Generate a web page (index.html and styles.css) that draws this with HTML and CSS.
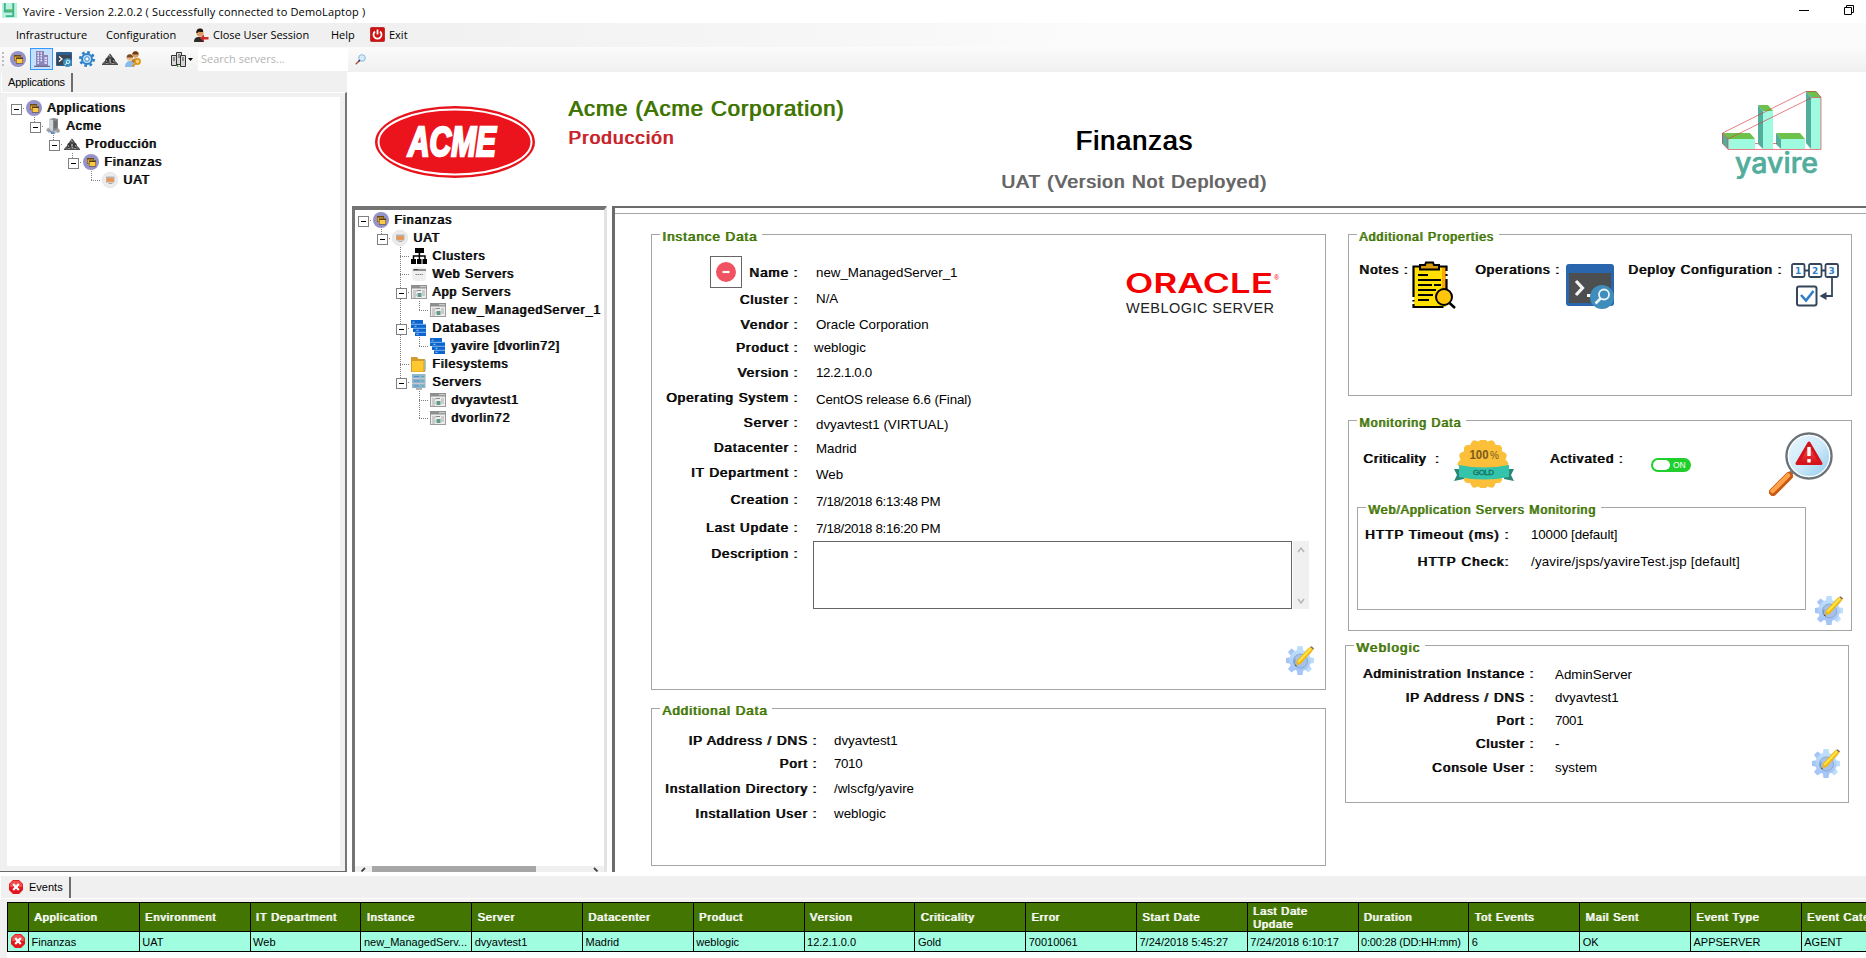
FILE: index.html
```html
<!DOCTYPE html>
<html lang="en">
<head>
<meta charset="utf-8">
<title>Yavire</title>
<link rel="stylesheet" href="styles.css">
</head>
<body>
<svg class="defs" width="0" height="0">
  <defs>
    <linearGradient id="sky" x1="0" y1="0" x2="0" y2="1"><stop offset="0" stop-color="#bfe0fb"/><stop offset="1" stop-color="#a3c2f7"/></linearGradient>
    <linearGradient id="glass" x1="0" y1="0" x2="1" y2="1"><stop offset="0" stop-color="#eaf7fe"/><stop offset=".5" stop-color="#cfeafa"/><stop offset="1" stop-color="#8cc8ec"/></linearGradient>
    <linearGradient id="red" x1="0" y1="0" x2="0" y2="1"><stop offset="0" stop-color="#f7615f"/><stop offset="1" stop-color="#d80f16"/></linearGradient>
  </defs>
  <symbol id="apps" viewBox="0 0 16 16"><circle cx="8" cy="8" r="8" fill="#9492c8"/><path d="M4 4h7v6H4z" fill="#6b4a12"/><path d="M4.500 5.500h6v4h-6z" fill="#e0a93c"/><path d="M6 6.500h7v6H6z" fill="#5b3d0c"/><path d="M6.500 8h6v4h-6z" fill="#fbc945"/></symbol>
  <symbol id="srvgray" viewBox="0 0 16 16"><path d="M1 11l4-2h7l3 3-6 4z" fill="#b9bcbf"/><path d="M4 1l5-1 4 1v10l-4 2-5-2z" fill="#85888b"/><path d="M4 1l4 1v11l-4-2z" fill="#d3d6d8"/><path d="M9 3l3-.5v7L9 10.500z" fill="#6b6e71"/><path d="M1 12l3-2 2 3-2 2zM11 12l3-1 1 3-3 1z" fill="#9da1a5"/><path d="M5 13l4 1 1 2-4 0z" fill="#5a8fc0"/></symbol>
  <symbol id="pyr" viewBox="0 0 16 16"><path d="M8 2.500l2.500 3-1 3h-3l-1-3z" fill="#4a4a4a"/><path d="M3.500 8l2-2 2 3-1 3h-4zM12.500 8l-2-2-2 3 1 3h4z" fill="#333"/><path d="M0 13l2.500-3 2.500 3zM5 13l3-4 3 4zM11 13l2.500-3L16 13z" fill="#5c5c5c"/><path d="M0 13h16v.8H0z" fill="#222"/><path d="M7 4l1.500 2M4 9l1 2M11 9l1.200 2M8 10.500l.8 2" stroke="#bbb" stroke-width=".8"/></symbol>
  <symbol id="uat" viewBox="0 0 16 16"><circle cx="8" cy="8" r="7.800" fill="#ececec" stroke="#d8d8d8" stroke-width=".5"/><rect x="4" y="4.500" width="8.500" height="6" fill="#b9b0ae"/><rect x="5" y="6.500" width="6.500" height="3" fill="#f5923c"/><path d="M6.500 11h4v.8h-4z" fill="#999"/></symbol>
  <symbol id="clusters" viewBox="0 0 16 16"><path d="M4 0h9v5H4zM0 11h5v5H0zM6 11h4.500v5H6zM11.500 11H16v5h-4.500z"/><path d="M8.400 5v6M2.500 11V8h11.500v3" fill="none" stroke="#000" stroke-width="1.500"/></symbol>
  <symbol id="websrv" viewBox="0 0 16 16"><rect x="1" y="1" width="14" height="14" rx="4" fill="#efefef"/><path d="M2 3h13v2H2z" fill="#8b8d90"/><path d="M3 3h4v1H3z" fill="#444"/><path d="M4.500 8.500h7.500" stroke="#888" stroke-dasharray="1.500 .5"/></symbol>
  <symbol id="appsrv" viewBox="0 0 16 16"><rect x=".5" y="1.500" width="15" height="13" fill="#ededed" stroke="#9b9b9b"/><path d="M0 1h16v3.500H0z" fill="#8d8f90"/><path d="M9 2.200h6v1H9z" fill="#d9d9d9"/><path d="M2 7h4M2 9h3M2 11h4M2 13h3M11 7h3M11 9h3M11 11h3" stroke="#a9a9a9"/><rect x="6.500" y="9" width="4" height="4" fill="#5c9c8c"/><path d="M6 6.500h4" stroke="#888"/></symbol>
  <symbol id="db" viewBox="0 0 16 16"><path d="M0 0h12v4h3v12H4v-4H2V8H0z" fill="#0c64cf"/><path d="M0 4.300h15M2 8.300h13M4 12.300h11" stroke="#9ccdf7" stroke-width=".8"/><path d="M1.500 2.200h2M3.500 6.300h2M5.500 10.300h2M5.500 14.300h2" stroke="#cfe6fb" stroke-width=".8"/></symbol>
  <symbol id="folder" viewBox="0 0 16 16"><path d="M0 1h6l1.500 2H14v13H0z" fill="#d39a2c"/><path d="M13 3.500l1.800.5V15H13z" fill="#a7b79b"/><path d="M1 5H12.500v10.500H1z" fill="#fdc92f"/></symbol>
  <symbol id="servers" viewBox="0 0 16 16"><rect x="1" y="0" width="13.500" height="14" fill="#8fb7c8"/><path d="M1 4.500h13.500M1 9.500h13.500" stroke="#c9c4da"/><path d="M3 2.500h5M3 7h6M3 12h5" stroke="#4f8ad8"/><path d="M10 2.500h3M10 7h3M10 12h3" stroke="#4fb3a6"/><path d="M5 15h6" stroke="#999" stroke-width="1.500"/></symbol>
  <symbol id="gearpen" viewBox="0 0 28 29"><g fill="url(#sky)"><g id="teeth"><path d="M11.500 0h5l.8 5h-6.600zM11.500 29h5l.8-5h-6.600z"/></g><use href="#teeth" transform="rotate(45 14 14.500)"/><use href="#teeth" transform="rotate(90 14 14.500)"/><use href="#teeth" transform="rotate(135 14 14.500)"/><circle cx="14" cy="14.500" r="10.700"/></g><circle cx="14.500" cy="15" r="7" fill="#a6c0e8" stroke="#8aa8d0"/><path d="M11 21a7 7 0 0 1-2-8" fill="none" stroke="#6d95b5"/><path d="M9 20l2-5.500L23.500 1l4 2.800-13 14.200z" fill="#f5b80c"/><path d="M11.600 15.200L24.500 1.600l1.600 1.200-13 13.800z" fill="#ffe648"/><path d="M9 20l1.300-3.700 2.500 2.500z" fill="#c9b48a"/><path d="M9 20l.6-1.600 1.100 1z" fill="#222"/><path d="M24.200 1l1-.8 2.800 2-.9 1.300z" fill="#7a5a4a"/></symbol>
  <symbol id="stop" viewBox="0 0 14 14"><path d="M4 0h6l4 4v6l-4 4H4l-4-4V4z" fill="#e2161b"/><path d="M4.300.8h5.400l3.500 3.500V7H.8V4.300z" fill="#ef4f4f"/><path d="M4.200 4l5.600 6M9.800 4l-5.600 6" stroke="#fff" stroke-width="2.200"/></symbol>
</svg>

<header class="titlebar">
  <svg class="title-icon" viewBox="0 0 16 16"><rect width="16" height="16" fill="#b9f3dd"/><path d="M4 0v7h7V0h2v10H2V0zM4 13h9v2H4zM11 8h2v6h-2z" fill="#43b08f"/><path d="M6 7h5v1.500H6z" fill="#6cc24a"/></svg>
  <span class="title-text">Yavire - Version 2.2.0.2 ( Successfully connected to DemoLaptop )</span>
  <svg class="win-min" viewBox="0 0 10 10"><path d="M0 5.500h10" stroke="#000"/></svg>
  <svg class="win-max" viewBox="0 0 10 10"><path d="M.5 2.500h7v7h-7zM2.500 2.500v-2h7v7h-2" fill="none" stroke="#000"/></svg>
</header>
<nav class="menubar">
  <span class="m-infra">Infrastructure</span>
  <span class="m-conf">Configuration</span>
  <svg class="m-user" viewBox="0 0 15 14"><path d="M0 14c0-4 2-5 5-5s5 1 5 5z" fill="#2b2b2b"/><circle cx="6" cy="5" r="3.500" fill="#d99a63"/><path d="M2.300 5C2 1 5 0 7 .5S9.500 3 9 4C6 4 4 3 3.500 5z" fill="#1d1512"/><path d="M14.500 11.500H10V14l-4-4 4-3.500V9h4.500z" fill="#cf2a27"/></svg>
  <span class="m-close">Close User Session</span>
  <span class="m-help">Help</span>
  <svg class="m-power" viewBox="0 0 15 15"><rect x=".5" y=".5" width="14" height="14" rx="1" fill="#cf1111" stroke="#b33"/><path d="M5 4.500a4 4 0 1 0 5 0" fill="none" stroke="#fff" stroke-width="1.800"/><path d="M7.500 2.500v5" stroke="#fff" stroke-width="1.800"/></svg>
  <span>Exit</span>
</nav>
<div class="toolbar">
  <i class="grip"></i>
  <svg class="tb"><use href="#apps"/></svg>
  <span class="tb-selected"><svg viewBox="0 0 16 16"><path d="M2 0h8v4h4v11H2z" fill="#8c86bd"/><path d="M3.500 2h1.500M6.500 2H8M3.500 4.500h1.500M6.500 4.500H8M3.500 7h1.500M6.500 7H8M3.500 9.500h1.500M6.500 9.500H8M10.500 7H13M10.500 9.500H13M10.500 12H13M3.500 12h1.500" stroke="#eef" stroke-width="1.400"/><path d="M0 15.300h16" stroke="#5b5670"/></svg></span>
  <svg class="tb t-term" viewBox="0 0 16 16"><rect y="1" width="16" height="14" rx="1" fill="#2a5f8f"/><rect x="1" y="4" width="14" height="10" fill="#3d4650"/><path d="M3 5.500l3 2.500-3 2.500" fill="none" stroke="#fff" stroke-width="1.300"/><circle cx="11.500" cy="11.500" r="4.500" fill="#3f8dbb"/><circle cx="12" cy="10.800" r="1.700" fill="none" stroke="#dff"/><path d="M10.800 12l-2 2" stroke="#dff"/></svg>
  <svg class="tb t-gear" viewBox="0 0 16 16"><circle cx="8" cy="8" r="6.800" fill="none" stroke="#2a7cc4" stroke-width="2.400" stroke-dasharray="2.700 2.640"/><circle cx="8" cy="8" r="5" fill="#bfe0f8" stroke="#2f83cc" stroke-width="2"/><circle cx="8" cy="8" r="2.200" fill="#fff" stroke="#2f83cc"/></svg>
  <svg class="tb t-pyr"><use href="#pyr"/></svg>
  <svg class="tb t-users" viewBox="0 0 16 16"><circle cx="10.500" cy="3.500" r="3.200" fill="#d9a066"/><path d="M7.300 3.500c0-4.500 6.400-4.500 6.400 0z" fill="#6b3c16"/><path d="M6 12c0-6 9-6 9 0z" fill="#b5772a"/><circle cx="4.800" cy="6.500" r="3.200" fill="#e8b988"/><path d="M1.600 6.500c0-4.500 6.400-4.500 6.400 0z" fill="#7b4a1c"/><path d="M0 16c0-8 9.500-8 9.500 0z" fill="#8dbbe8"/><circle cx="12.500" cy="10.500" r="2.600" fill="#f5d27a" stroke="#d9951c" stroke-width="1.600"/><path d="M11 12l-3.500 3.500" stroke="#d9951c" stroke-width="1.800"/></svg>
  <svg class="t-srv" viewBox="0 0 15 15"><g fill="#d6d6d6" stroke="#333"><path d="M5.500.5h5v12h-5z"/><path d="M.5 3.500h5v10h-5zM9.500 3.500h5v11h-5z"/></g><path d="M2 6h2M2 8h2M11 6h2M11 8h2M7 3h2M7 5h2" stroke="#444"/><path d="M6.500 13v2h2" fill="none" stroke="#3a9a3a"/></svg>
  <svg class="t-arrow" viewBox="0 0 5 3"><path d="M0 0h5L2.500 3z"/></svg>
  <span class="search">Search servers...</span>
  <svg class="t-find" viewBox="0 0 11 11"><circle cx="7" cy="4" r="3.300" fill="#d6ecfb" stroke="#8fb6d8"/><path d="M4.500 6.500L.7 10.300" stroke="#b5572e" stroke-width="1.500"/><path d="M5 6l-1.500 1.500" stroke="#26408b" stroke-width="1.500"/></svg>
</div>

<main class="main">
  <aside class="nav">
    <div class="tab nav-tab">Applications</div>
    <div class="nav-page">
      <div class="tree tree-nav">
        <div class="node"><i class="c box root"></i><svg><use href="#apps"/></svg><b>Applications</b></div>
        <div class="node"><i class="c"></i><i class="c box end"></i><svg><use href="#srvgray"/></svg><b>Acme</b></div>
        <div class="node"><i class="c"></i><i class="c"></i><i class="c box end"></i><svg><use href="#pyr"/></svg><b>Producción</b></div>
        <div class="node"><i class="c"></i><i class="c"></i><i class="c"></i><i class="c box end"></i><svg><use href="#apps"/></svg><b>Finanzas</b></div>
        <div class="node"><i class="c"></i><i class="c"></i><i class="c"></i><i class="c"></i><i class="c end"></i><svg><use href="#uat"/></svg><b>UAT</b></div>
      </div>
    </div>
  </aside>

  <section class="work">
    <div class="banner">
      <svg class="acme" viewBox="0 0 160 72"><ellipse cx="80" cy="36" rx="80" ry="36" fill="#e8121b"/><ellipse cx="80" cy="36" rx="76.500" ry="32.500" fill="#ec141c" stroke="#fff" stroke-width="2"/><text x="0" y="0" transform="translate(33 50)" textLength="88" lengthAdjust="spacingAndGlyphs" class="acme-text">ACME</text></svg>
      <div class="company"><div class="company-name">Acme (Acme Corporation)</div><div class="company-env">Producción</div></div>
      <div class="app"><div class="app-name">Finanzas</div><div class="app-env">UAT (Version Not Deployed)</div></div>
      <svg class="yavire" viewBox="0 0 100 88">
        <path d="M0 42h28l5 6H6z" fill="#6cc24a"/><path d="M0 42l6 6v10l-6-6z" fill="#52ad9c"/><path d="M6 48h27v10H6z" fill="#9ffbe0"/>
        <path d="M36 14h10l5 6H41z" fill="#6cc24a"/><path d="M36 14l5 6v38l-5-5z" fill="#52ad9c"/><path d="M41 20h10v38H41z" fill="#9ffbe0"/>
        <path d="M54 42h24l5 6H59z" fill="#6cc24a"/><path d="M54 42l5 6v10l-5-5z" fill="#52ad9c"/><path d="M59 48h24v10H59z" fill="#9ffbe0"/>
        <path d="M84 0h10l5 6H89z" fill="#6cc24a"/><path d="M84 0l5 6v52l-5-6z" fill="#52ad9c"/><path d="M89 6h10v52H89z" fill="#9ffbe0"/>
        <path d="M.5 42L84 .5h10l5 6v52H6l-5.500-6zM.5 42L6 48l84-41.500h9M6 48v10M33 52.500h3M51 52.500h4" fill="none" stroke="#d83a44" stroke-opacity=".65"/>
        <text x="13" y="81.500" textLength="83" lengthAdjust="spacingAndGlyphs" class="yavire-text">yavire</text>
      </svg>
    </div>

    <div class="panes">
      <div class="tree-pane">
        <div class="tree tree-app">
          <div class="node"><i class="c box root"></i><svg><use href="#apps"/></svg><b>Finanzas</b></div>
          <div class="node"><i class="c"></i><i class="c box end"></i><svg><use href="#uat"/></svg><b>UAT</b></div>
          <div class="node"><i class="c"></i><i class="c"></i><i class="c mid"></i><svg><use href="#clusters"/></svg><b>Clusters</b></div>
          <div class="node"><i class="c"></i><i class="c"></i><i class="c mid"></i><svg><use href="#websrv"/></svg><b>Web Servers</b></div>
          <div class="node"><i class="c"></i><i class="c"></i><i class="c box mid"></i><svg><use href="#appsrv"/></svg><b>App Servers</b></div>
          <div class="node"><i class="c"></i><i class="c"></i><i class="c bar"></i><i class="c end"></i><svg><use href="#appsrv"/></svg><b>new_ManagedServer_1</b></div>
          <div class="node"><i class="c"></i><i class="c"></i><i class="c box mid"></i><svg><use href="#db"/></svg><b>Databases</b></div>
          <div class="node"><i class="c"></i><i class="c"></i><i class="c bar"></i><i class="c end"></i><svg><use href="#db"/></svg><b class="tight">yavire [dvorlin72]</b></div>
          <div class="node"><i class="c"></i><i class="c"></i><i class="c mid"></i><svg><use href="#folder"/></svg><b>Filesystems</b></div>
          <div class="node"><i class="c"></i><i class="c"></i><i class="c box end"></i><svg><use href="#servers"/></svg><b>Servers</b></div>
          <div class="node"><i class="c"></i><i class="c"></i><i class="c"></i><i class="c mid"></i><svg><use href="#appsrv"/></svg><b class="tight">dvyavtest1</b></div>
          <div class="node"><i class="c"></i><i class="c"></i><i class="c"></i><i class="c end"></i><svg><use href="#appsrv"/></svg><b>dvorlin72</b></div>
        </div>
        <div class="hscroll"><svg viewBox="0 0 6 6"><path d="M5 2L1.500 5.500" stroke="#444" stroke-width="1.800"/></svg><i></i><svg viewBox="0 0 6 6"><path d="M1 2l3.500 3.500" stroke="#444" stroke-width="1.800"/></svg></div>
      </div>

      <div class="detail"><div class="detail-page">
        <div class="col-left">
          <section class="group instance">
            <h2>Instance Data</h2>
            <div class="instance-body">
              <div class="fields">
                <div class="row h27"><span class="lbl"><span class="status"><svg viewBox="0 0 20 20"><circle cx="10" cy="10" r="10" fill="#f05261"/><path d="M6.500 10h7" stroke="#fff" stroke-width="2.200"/></svg></span>Name :</span><span class="val">new_ManagedServer_1</span></div>
                <div class="row h25"><span class="lbl">Cluster :</span><span class="val up1">N/A</span></div>
                <div class="row h23"><span class="lbl">Vendor :</span><span class="val">Oracle Corporation</span></div>
                <div class="row h25"><span class="lbl">Product :</span><span class="val left1">weblogic</span></div>
                <div class="row h25"><span class="lbl">Version :</span><span class="val num">12.2.1.0.0</span></div>
                <div class="row h25"><span class="lbl">Operating System :</span><span class="val dn2 snug">CentOS release 6.6 (Final)</span></div>
                <div class="row h25"><span class="lbl">Server :</span><span class="val dn2">dvyavtest1 (VIRTUAL)</span></div>
                <div class="row h25"><span class="lbl">Datacenter :</span><span class="val dn1">Madrid</span></div>
                <div class="row h27"><span class="lbl">IT Department :</span><span class="val dn2">Web</span></div>
                <div class="row h28"><span class="lbl">Creation :</span><span class="val dn2 num">7/18/2018 6:13:48 PM</span></div>
                <div class="row h22"><span class="lbl">Last Update :</span><span class="val dn1 num">7/18/2018 8:16:20 PM</span></div>
              </div>
              <svg class="oracle" viewBox="0 0 156 42"><text x="-1" y="20" textLength="148" lengthAdjust="spacingAndGlyphs" class="oracle-text">ORACLE</text><text x="148" y="7" class="oracle-reg">®</text><text x="0" y="40" textLength="148" class="oracle-sub">WEBLOGIC SERVER</text></svg>
            </div>
            <div class="desc"><span class="lbl">Description :</span><div class="textbox"></div><div class="vscroll"><svg viewBox="0 0 8 6"><path d="M1 5l3-4 3 4" fill="none" stroke="#b5b5b5" stroke-width="1.500"/></svg><svg viewBox="0 0 8 6"><path d="M1 1l3 4 3-4" fill="none" stroke="#b5b5b5" stroke-width="1.500"/></svg></div></div>
            <svg class="edit"><use href="#gearpen"/></svg>
          </section>
          <section class="group additional">
            <h2>Additional Data</h2>
            <div class="fields">
              <div class="row h23"><span class="lbl">IP Address / DNS :</span><span class="val">dvyavtest1</span></div>
              <div class="row h25"><span class="lbl">Port :</span><span class="val num">7010</span></div>
              <div class="row h25"><span class="lbl">Installation Directory :</span><span class="val">/wlscfg/yavire</span></div>
              <div class="row h25"><span class="lbl">Installation User :</span><span class="val">weblogic</span></div>
            </div>
          </section>
        </div>
        <div class="col-right">
          <section class="group props">
            <h2>Additional Properties</h2>
            <div class="props-row">
              <span class="lbl p-notes">Notes :</span>
              <svg class="i-notes" viewBox="0 0 44 48"><path d="M2 5h32v41H2z" fill="#ffe000"/><path d="M30 5h4v34h-4z" fill="#f9a60a"/><path d="M1.500 36V5.500H11M25 5.500h9.500V10M34.500 13v2M34.500 18v15M1.500 39v1.500M1.500 43v3h30" fill="none" stroke="#000" stroke-width="2.200"/><path d="M8 8.500V4h5l1-2.500h7L22 4h5v4.500z" fill="#d99a0b" stroke="#000" stroke-width="2"/><path d="M6 14h10M6 19h23M6 24h14M22 24h7M6 29h18M6 34h15M6 39h11" stroke="#000" stroke-width="1.900"/><circle cx="32" cy="36" r="8" fill="#ffc60a" stroke="#000" stroke-width="2"/><path d="M37.500 42l5.500 5" stroke="#000" stroke-width="2.500"/></svg>
              <span class="lbl p-ops">Operations :</span>
              <svg class="i-ops" viewBox="0 0 48 45"><rect width="48" height="42" rx="3" fill="#2a66ae"/><path d="M3 9h42v30H3z" fill="#4c4e50"/><path d="M10 17l6.500 7-6.500 7" fill="none" stroke="#f4f4f4" stroke-width="3.200"/><path d="M21 30h6v3h-6z" fill="#fff"/><circle cx="36" cy="33" r="12" fill="#3f8dbb"/><circle cx="38" cy="30.500" r="5" fill="none" stroke="#e9f4fa" stroke-width="1.800"/><path d="M34.500 34.500l-5 5" stroke="#e9f4fa" stroke-width="2.600"/></svg>
              <span class="lbl p-dep">Deploy Configuration :</span>
              <svg class="i-dep" viewBox="0 0 48 44"><g fill="#fff" stroke="#34465a" stroke-width="1.800"><rect x="1" y="1" width="12.500" height="13" rx="1.500"/><rect x="18" y="1" width="12.500" height="13" rx="1.500"/><rect x="34.500" y="1" width="12.500" height="13" rx="1.500"/><rect x="6" y="23.500" width="19.500" height="19" rx="2" stroke-width="2"/><path d="M13.500 7.500H18M30.500 7.500h4"/><path d="M41 14v19H31" fill="none"/></g><path d="M28.500 33l7-4v8z" fill="#34465a"/><path d="M10 32l5 5.500L22.500 28" fill="none" stroke="#2f7fc8" stroke-width="2.600"/><g class="dep-num"><text x="7.200" y="11">1</text><text x="24.200" y="11">2</text><text x="40.700" y="11">3</text></g></svg>
            </div>
          </section>
          <section class="group monitoring">
            <h2>Monitoring Data</h2>
            <div class="mon-row">
              <span class="lbl m-crit">Criticality&nbsp; :</span>
              <svg class="i-gold" viewBox="0 0 60 48"><g fill="#fbbf3a"><rect x="11" y="5" width="38" height="38" rx="4" transform="translate(-1 0)"/><rect x="10" y="5" width="38" height="38" rx="4" transform="rotate(22.500 29 24)"/><rect x="10" y="5" width="38" height="38" rx="4" transform="rotate(45 29 24)"/><rect x="10" y="5" width="38" height="38" rx="4" transform="rotate(67.500 29 24)"/></g><path d="M0 29h10v10l-10 2 3-6zM60 29H50v10l10 2-3-6z" fill="#2a8878"/><path d="M5 25q25 5 50 0v12q-25 5-50 0z" fill="#33c4ab"/><text x="15.500" y="19" textLength="19" lengthAdjust="spacingAndGlyphs" class="gold-num">100</text><text x="36" y="19" class="gold-pct">%</text><text x="19" y="35" textLength="21" class="gold-txt">GOLD</text></svg>
              <span class="lbl m-act">Activated :</span>
              <svg class="i-on" viewBox="0 0 40 14"><rect width="40" height="14" rx="7" fill="#20cf2c"/><rect x="2" y="2" width="17" height="10" rx="5" fill="#fff"/><text x="22" y="10" class="on-txt">ON</text></svg>
              <svg class="i-alert" viewBox="0 0 64 64"><path d="M23 40l-4 4" stroke="#777" stroke-width="4"/><path d="M20 44L4 60" stroke="#c85a14" stroke-width="8" stroke-linecap="round"/><path d="M19 43.500L3.500 59" stroke="#ffa24a" stroke-width="4.500" stroke-linecap="round"/><circle cx="40" cy="24" r="22.500" fill="url(#glass)" stroke="#6d7276" stroke-width="2.500"/><circle cx="40" cy="24" r="20.700" fill="none" stroke="#fff" stroke-width="1.200"/><path d="M40 11L28 31.500h24z" fill="url(#red)" stroke="#d3141b" stroke-width="3" stroke-linejoin="round"/><path d="M40 15v9M40 27v3.500" stroke="#fff" stroke-width="3.400"/></svg>
            </div>
            <div class="mon-bottom">
              <section class="group web">
                <h2>Web/Application Servers Monitoring</h2>
                <div class="fields">
                  <div class="row h27"><span class="lbl wide">HTTP Timeout (ms) :</span><span class="val snug">10000 [default]</span></div>
                  <div class="row h25"><span class="lbl wide">HTTP Check:</span><span class="val loose">/yavire/jsps/yavireTest.jsp [default]</span></div>
                </div>
              </section>
              <svg class="edit"><use href="#gearpen"/></svg>
            </div>
          </section>
          <section class="group weblogic">
            <h2>Weblogic</h2>
            <div class="wl-body">
              <div class="fields">
                <div class="row h24"><span class="lbl">Administration Instance :</span><span class="val dn1">AdminServer</span></div>
                <div class="row h23"><span class="lbl">IP Address / DNS :</span><span class="val">dvyavtest1</span></div>
                <div class="row h23"><span class="lbl">Port :</span><span class="val num">7001</span></div>
                <div class="row h24"><span class="lbl">Cluster :</span><span class="val">-</span></div>
                <div class="row h24"><span class="lbl">Console User :</span><span class="val">system</span></div>
              </div>
              <svg class="edit"><use href="#gearpen"/></svg>
            </div>
          </section>
        </div>
      </div></div>
    </div>
  </section>
</main>

<footer class="events">
  <div class="events-tabs"><div class="tab events-tab"><svg><use href="#stop"/></svg><span>Events</span></div></div>
  <div class="grid-wrap">
    <div class="grid head"><span></span><span>Application</span><span>Environment</span><span>IT Department</span><span>Instance</span><span>Server</span><span>Datacenter</span><span>Product</span><span>Version</span><span>Criticality</span><span>Error</span><span>Start Date</span><span>Last Date<br>Update</span><span>Duration</span><span>Tot Events</span><span>Mail Sent</span><span>Event Type</span><span>Event Category</span></div>
    <div class="grid data"><span class="ico"><svg><use href="#stop"/></svg></span><span>Finanzas</span><span>UAT</span><span>Web</span><span>new_ManagedServ...</span><span>dvyavtest1</span><span>Madrid</span><span>weblogic</span><span>12.2.1.0.0</span><span>Gold</span><span>70010061</span><span>7/24/2018 5:45:27</span><span>7/24/2018 6:10:17</span><span class="dur">0:00:28 (DD:HH:mm)</span><span>6</span><span>OK</span><span>APPSERVER</span><span>AGENT</span></div>
  </div>
</footer>
</body>
</html>
```
FILE: styles.css
```css
* { box-sizing: border-box; }
html, body { height: 100%; }
body {
  margin: 0;
  width: 1866px;
  height: 958px;
  overflow: hidden;
  background: #fff;
  color: #000;
  font: 11px/16px "Liberation Sans", Arial, sans-serif;
  display: flex;
  flex-direction: column;
  white-space: nowrap;
}
svg { display: block; flex: none; }
.defs { position: absolute; }

/* Window chrome */
.titlebar, .menubar, .toolbar {
  display: flex;
  align-items: center;
  flex: none;
  font-family: "Open Sans", "Noto Sans", sans-serif;
  font-size: 11px;
}
.titlebar { height: 23px; background: #fff; }
.title-icon { width: 15px; height: 15px; margin: 0 6px 2px 2px; }
.title-text { flex: 1; letter-spacing: .16px; }
.win-min { width: 10px; height: 10px; margin: 0 35px 3px 0; }
.win-max { width: 10px; height: 10px; margin: 0 12px 3px 0; }

.menubar { height: 24px; background: linear-gradient(90deg, #f0f0f0 0, #f0f0f0 20%, #fbfbfb 60%); padding-left: 16px; }
.m-infra { width: 90px; }
.m-conf { width: 88px; }
.m-user { width: 15px; height: 14px; margin-right: 4px; }
.m-close { width: 118px; }
.m-help { width: 38px; }
.m-power { width: 15px; height: 15px; margin: 0 4px 1px 1px; }

.toolbar { height: 25px; background: linear-gradient(#fbfbfb, #f0f0f0); padding-bottom: 1px; }
.grip { width: 2px; height: 14px; margin: 0 6px 0 2px; background: repeating-linear-gradient(#bdbdbd 0 2px, transparent 2px 4px); }
.tb { width: 16px; height: 16px; }
.tb-selected { width: 23px; height: 22px; margin: 0 3px 0 4px; background: #c4e0fc; border: 1px solid #3399ff; display: flex; justify-content: center; align-items: center; }
.tb-selected svg { width: 16px; height: 16px; }
.t-gear, .t-pyr, .t-users { margin-left: 7px; }
.t-srv { width: 15px; height: 15px; margin-left: 30px; }
.t-arrow { width: 5px; height: 3px; margin: 0 5px 0 2px; }
.search { width: 150px; height: 23px; line-height: 22px; padding-left: 3px; background: #fff; color: #b4b4b4; }
.t-find { width: 11px; height: 11px; margin-left: 7px; }

/* Main split */
.main { height: 804px; flex: none; display: flex; }
.nav { width: 347px; height: 800px; background: #f0f0f0; display: flex; flex-direction: column; border-bottom: 1px solid #696969; }
.tab { border-right: 2px solid #6d6d6d; border-left: 1px solid #fff; background: #f0f0f0; }
.nav-tab { width: 72px; height: 20px; margin: 1px 0 0 1px; padding: 1px 0 0 6px; font-size: 11px; letter-spacing: -.2px; }
.nav-page { flex: 1; border-top: 1px solid #fff; border-right: 2px solid #777; margin: -1px 0 0 1px; padding: 4px 5px 5px 6px; }
.tree-nav { background: #fff; height: 100%; padding-top: 2px; }

/* Tree view: each .c cell is one indent level, drawing its share of the guide lines */
.node { display: flex; height: 18px; align-items: center; margin-left: -1px; }
.node svg { width: 16px; height: 16px; margin: 0 5px 0 1px; }
.node b, .lbl, h2, .company-name, .company-env, .app-name, .app-env, .head span {
  font-weight: normal;
  letter-spacing: 1px;
  text-shadow: 1px 0 0 currentColor;
}
.node b { font-size: 12.33px; line-height: 18px; }
.node .tight { letter-spacing: .85px; }
.c {
  --h: repeating-linear-gradient(90deg, #808080 0 1px, transparent 1px 2px);
  --v: repeating-linear-gradient(#808080 0 1px, transparent 1px 2px);
  position: relative;
  width: 19px;
  height: 18px;
  flex: none;
  background-repeat: no-repeat;
}
.root { background-image: var(--h); background-position: 9px 9px; background-size: 10px 1px; }
.mid { background-image: var(--h), var(--v); background-position: 9px 9px, 9px 0; background-size: 10px 1px, 1px 18px; }
.end { background-image: var(--h), var(--v); background-position: 9px 9px, 9px 0; background-size: 10px 1px, 1px 9px; }
.bar { background-image: var(--v); background-position: 9px 0; background-size: 1px 18px; }
.box::after {
  content: "";
  position: absolute;
  left: 5px;
  top: 5px;
  width: 9px;
  height: 9px;
  border: 1px solid #808080;
  background: linear-gradient(#000, #000) center / 5px 1px no-repeat #fff;
}

/* Banner */
.work { width: 1519px; display: flex; flex-direction: column; background: #fff; }
.banner { height: 134px; flex: none; display: flex; }
.acme { width: 160px; height: 72px; margin: 34px 0 0 28px; }
.acme-text { font: italic bold 42px "Liberation Sans", Arial, sans-serif; fill: #fff; stroke: #fff; stroke-width: 2.5px; }
.company { width: 300px; margin: 23px 0 0 33px; }
.company-name { font-size: 22px; line-height: 28px; letter-spacing: .95px; color: #3f7502; }
.company-env { font-size: 19px; line-height: 24px; margin-top: 3px; letter-spacing: 1.1px; color: #c8242c; }
.app { width: 560px; margin: 51px 0 0 -14px; text-align: center; }
.app-name { font-size: 27px; line-height: 36px; }
.app-env { font-size: 19px; line-height: 24px; margin-top: 11px; letter-spacing: 1.08px; color: #666; }
.yavire { width: 100px; height: 88px; margin: 19px 0 0 308px; }
.yavire-text { font: 500 28px Inter, sans-serif; fill: #52ad9c; stroke: #52ad9c; stroke-width: .6px; }

/* Panes */
.panes { display: flex; height: 666px; }
.tree-pane { width: 255px; margin: 0 5px 0 5px; border: solid; border-width: 4px 3px 0 3px; border-color: #747474 #e3e3e3 #747474 #747474; display: flex; flex-direction: column; }
.tree-app { height: 656px; padding: 1px 0 0; }
.tree-app .node { margin-left: -2px; }
.hscroll { height: 6px; background: #f0f0f0; display: flex; padding: 0 5px; justify-content: space-between; }
.hscroll svg { width: 6px; height: 6px; }
.hscroll i { width: 164px; background: #a6a6a6; margin: 0 auto 0 6px; }
.detail { width: 1254px; border: solid #6b6b6b; border-width: 2px 0 0 3px; padding-top: 5px; }
.detail-page { border-top: 1px solid #a5a5a5; display: flex; padding: 20px 0 0 36px; }

/* Group boxes */
.group { border: 1px solid #a5a5a5; display: flex; flex-direction: column; }
h2 { margin: -6px 0 -1px 8px; padding: 0 5px 0 2px; align-self: flex-start; background: #fff; font-size: 13.33px; line-height: 16px; color: #3f7502; }
.col-left { width: 675px; }
.col-right { width: 504px; margin-left: 22px; }
.instance { height: 456px; }
.additional { height: 158px; margin-top: 18px; }
.row { display: flex; align-items: flex-start; line-height: 16px; }
.lbl { font-size: 13.33px; line-height: 16px; text-align: right; flex: none; }
.val { font-size: 13.33px; }
.num { letter-spacing: -.35px; }
.snug { letter-spacing: -.12px; }
.loose { letter-spacing: .18px; }
.h22 { height: 22px; } .h23 { height: 23px; } .h24 { height: 24px; } .h25 { height: 25px; }
.h27 { height: 27px; } .h28 { height: 28px; }
.up1 { margin-top: -1px; } .dn1 { margin-top: 1px; } .dn2 { margin-top: 2px; }
.instance-body { display: flex; margin-top: 21px; }
.instance .fields { width: 474px; }
.instance .lbl { width: 146px; margin-right: 18px; display: flex; justify-content: flex-end; }
.instance .left1 { margin-left: -2px; }
.status { width: 32px; height: 32px; margin: -9px 7px -7px 0; border: 1px solid #666; display: flex; align-items: center; justify-content: center; }
.status svg { width: 20px; height: 20px; }
.oracle { width: 156px; height: 42px; margin-top: 8px; overflow: visible; }
.oracle-text { font: 600 26.5px Inter, sans-serif; fill: #f40000; }
.oracle-reg { font: 7px "Liberation Sans", sans-serif; fill: #f40000; }
.oracle-sub { font: 14.5px "Liberation Sans", sans-serif; fill: #222; }
.desc { display: flex; height: 68px; margin-top: -1px; }
.instance .desc .lbl { margin-right: 15px; padding-top: 5px; }
.textbox { width: 479px; border: 1px solid #646464; }
.vscroll { width: 16px; margin-left: 1px; background: #f0f0f0; display: flex; flex-direction: column; justify-content: space-between; align-items: center; padding: 6px 0 5px; }
.vscroll svg { width: 8px; height: 6px; }
.edit { width: 28px; height: 29px; }
.instance > .edit { margin: 37px 11px 0 auto; }
.additional .fields { margin-top: 15px; }
.additional .lbl { width: 165px; margin-right: 17px; }

.props { height: 162px; }
.props h2, .monitoring h2 { font-size: 12.33px; }
.props-row { display: flex; margin: 17px 0 0 10px; align-items: flex-start; }
.props-row .lbl, .mon-row .lbl { text-align: left; }
.p-notes, .p-ops, .p-dep { padding-top: 1px; }
.p-notes { width: 53px; }
.i-notes { width: 44px; height: 48px; }
.p-ops { width: 91px; margin-left: 19px; }
.i-ops { width: 48px; height: 45px; margin-top: 3px; }
.p-dep { width: 163px; margin-left: 14px; }
.i-dep { width: 48px; height: 44px; margin-top: 2px; }
.dep-num { font: bold 9px "DejaVu Sans", sans-serif; fill: #2f7fc8; text-anchor: middle; }

.monitoring { height: 211px; margin-top: 24px; }
.mon-row { display: flex; margin: 1px 0 0 14px; height: 76px; }
.mon-row .lbl { margin-top: 20px; }
.m-crit { width: 91px; }
.mon-row .m-crit { letter-spacing: .8px; }
.i-gold { width: 60px; height: 48px; margin-top: 9px; }
.m-act { width: 101px; margin-left: 36px; }
.i-on { width: 40px; height: 14px; margin-top: 27px; }
.i-alert { width: 64px; height: 64px; margin: 1px 0 0 78px; }
.gold-num { font: bold 12.5px "Liberation Sans", sans-serif; fill: #7a5a1c; }
.gold-pct { font: 10px "Liberation Sans", sans-serif; fill: #7a5a1c; }
.gold-txt { font: 8px "Liberation Sans", sans-serif; fill: #146f60; stroke: #146f60; stroke-width: .3px; }
.on-txt { font: 8.5px "Liberation Sans", sans-serif; fill: #fff; }
.mon-bottom { display: flex; margin-left: 8px; }
.web { width: 449px; height: 103px; }
.web h2 { letter-spacing: .94px; }
.web .fields { margin-top: 10px; }
.web .lbl { width: 151px; margin-right: 22px; }
.web .wide { letter-spacing: 1.1px; }
.mon-bottom .edit { margin: 89px 0 0 9px; }

.weblogic { height: 158px; margin: 14px 0 0 -3px; width: 504px; }
.weblogic h2 { letter-spacing: 1.2px; }
.wl-body { display: flex; }
.weblogic .fields { width: 466px; margin-top: 11px; }
.weblogic .lbl { width: 188px; margin-right: 21px; }
.wl-body .edit { margin-top: 94px; }

/* Events */
.events { height: 82px; background: #f0f0f0; display: flex; flex-direction: column; }
.events-tabs { height: 23px; border-bottom: 1px solid #fff; padding-top: 1px; flex: none; }
.events-tab { width: 71px; height: 21px; display: flex; align-items: center; padding-left: 8px; gap: 7px; }
.events-tab svg { width: 14px; height: 14px; margin-bottom: 2px; }
.events-tab span { margin: -2px 0 0 -1px; }
.grid-wrap { margin: 3px 0 0 7px; background: #fff; flex: 1; overflow: hidden; border-left: 1px solid #000; border-top: 1px solid #000; border-image: linear-gradient(#000 0 49px, #fff 49px) 1; }
.grid { display: grid; grid-template-columns: 21px repeat(17, 110.8px); border-bottom: 1px solid #000; }
.grid span { border-right: 1px solid #000; overflow: hidden; }
.head { height: 29px; background: #437503; color: #fff; }
.head span { display: flex; align-items: center; padding: 1px 0 0 5px; line-height: 12.500px; font-size: 11px; letter-spacing: .85px; }
.data { height: 20px; background: #a0fde0; }
.data span { line-height: 20px; padding-left: 2.5px; }
.data .dur { letter-spacing: -.2px; }
.data .ico { padding: 2px 0 0 3px; }
.ico svg { width: 14px; height: 14px; }
```
